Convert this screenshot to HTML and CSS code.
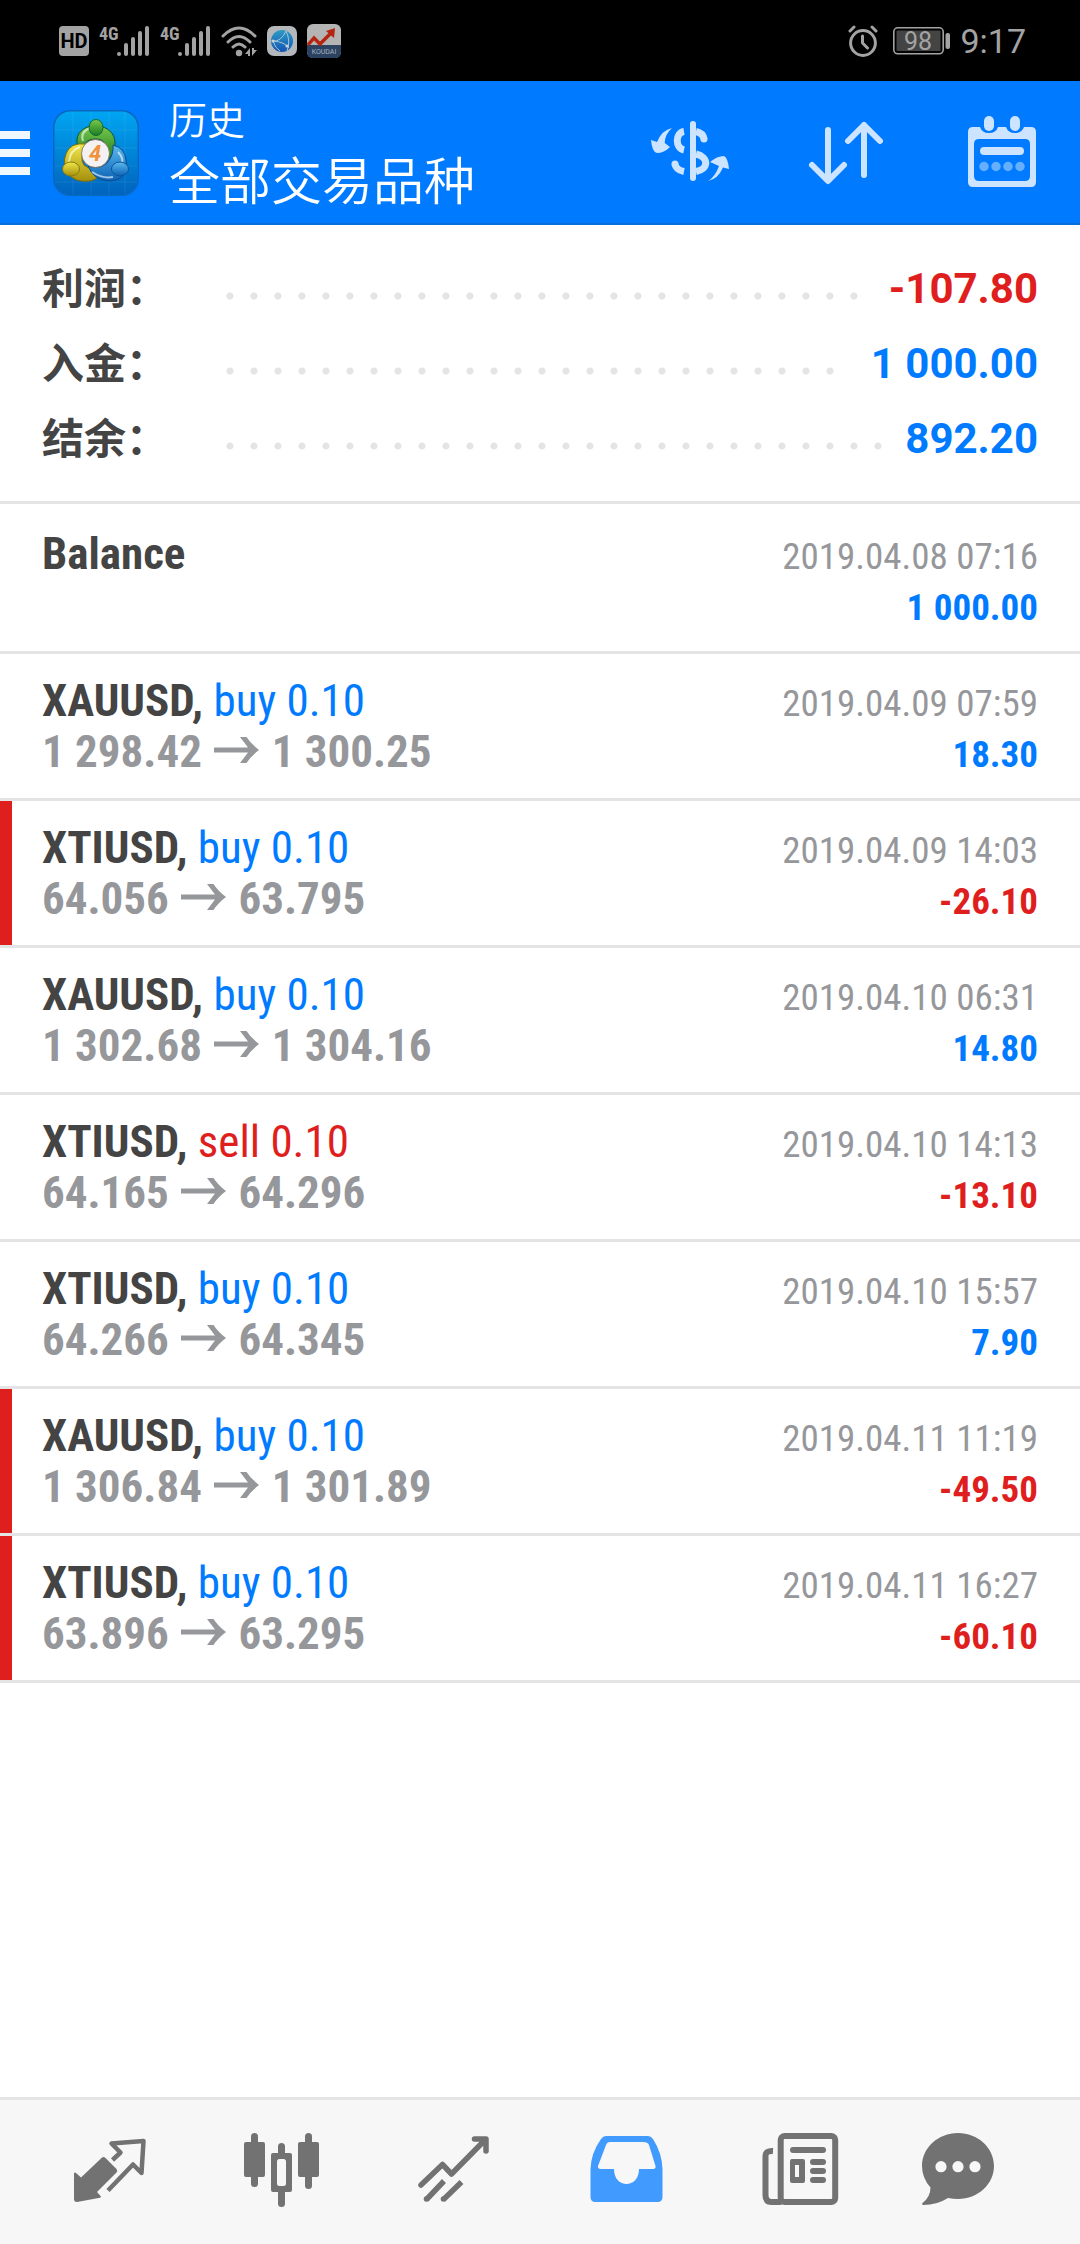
FILE: index.html
```html
<!DOCTYPE html>
<html lang="zh-CN">
<head>
<meta charset="utf-8">
<meta name="viewport" content="width=device-width, initial-scale=1">
<title>历史</title>
<link rel="stylesheet" href="styles.css">
</head>
<body>
<svg class="defs" width="0" height="0" aria-hidden="true"><symbol id="to" viewBox="0 0 45 26"><path d="M0 10.500h34L26 0h6.500Q37 7 45 13Q37 19 32.500 26H26l8-10.500H0z"/></symbol></svg>
<div class="status">
  <div class="status-group">
    <svg class="ic" width="30" height="30" viewBox="0 0 30 30"><rect width="30" height="30" rx="4" fill="#a3a3a3"/><text x="15" y="22" text-anchor="middle" class="hd">HD</text></svg>
    <svg class="ic" width="51" height="34" viewBox="0 0 51 34"><text x="0" y="16" class="net">4G</text><g stroke="#a3a3a3" stroke-width="4" stroke-linecap="round"><path d="M20 30v.1M27 21v9M34 15v15M41 9v21M48 4v26"/></g></svg>
    <svg class="ic" width="51" height="34" viewBox="0 0 51 34"><text x="0" y="16" class="net">4G</text><g stroke="#a3a3a3" stroke-width="4" stroke-linecap="round"><path d="M20 30v.1M27 21v9M34 15v15M41 9v21M48 4v26"/></g></svg>
    <svg class="ic" width="36" height="34" viewBox="0 0 36 34"><g fill="none" stroke="#a3a3a3" stroke-width="3" stroke-linecap="round"><path d="M2 12Q18-4 34 12M7 18Q18 7 29 18M12 23Q18 17 24 23"/></g><circle cx="18" cy="29" r="3.2" fill="#a3a3a3"/><path d="M24 30l5-6v8h-2v-2zM31 24v8l5-6h-3v-2z" fill="#a3a3a3"/></svg>
    <svg class="ic" width="30" height="30" viewBox="0 0 30 30"><defs><linearGradient id="gl" x1="0" y1="0" x2="0" y2="1"><stop offset="0" stop-color="#2b9cc4"/><stop offset="1" stop-color="#1653b4"/></linearGradient></defs><rect width="30" height="30" rx="7" fill="#b4b8ba"/><circle cx="15" cy="15" r="11" fill="url(#gl)"/><path d="M6 15Q14 16 19 5M6 15Q18 16 22 22M19 5Q24 15 20 25M6 15Q8 22 13 25" fill="none" stroke="#a8c4d4"/><circle cx="6" cy="15" r="1.6" fill="#c4d4dc"/><circle cx="20" cy="20" r="1.6" fill="#c4d4dc"/></svg>
    <svg class="ic" width="34" height="34" viewBox="0 0 34 34"><rect width="34" height="34" rx="6" fill="#b4b4b4"/><path d="M0 21h34v7q0 6-6 6H6q-6 0-6-6z" fill="#2b4260"/><path d="M1 21l6-7 6 6L24 9" fill="none" stroke="#b5240e" stroke-width="3.4"/><path d="M28 4l-1 10-8-7z" fill="#b5240e"/><text x="17" y="30" text-anchor="middle" class="koudai">KOUDAI</text></svg>
  </div>
  <div class="status-group">
    <svg class="ic" width="30" height="32" viewBox="0 0 30 32"><g fill="none" stroke="#a3a3a3" stroke-linecap="round" stroke-linejoin="round" stroke-width="3"><circle cx="15" cy="18" r="12.4"/><path d="M14.500 11v7l5 5M2 6l4-4M24 2l4 4"/></g></svg>
    <svg class="ic battery" width="57" height="28" viewBox="0 0 57 28"><rect x=".8" y=".8" width="49.400" height="26" rx="4" fill="#000" stroke="#a3a3a3" stroke-width="1.600"/><rect x="3.500" y="3.500" width="44" height="20.600" rx="1" fill="#444"/><rect x="52.500" y="6" width="4.500" height="16" rx="2" fill="#a3a3a3"/><text x="25" y="23" text-anchor="middle" class="level">98</text></svg>
    <span class="clock">9:17</span>
  </div>
</div>

<header class="bar">
  <button class="menu" aria-label="菜单"><span></span><span></span><span></span></button>
  <svg class="logo" width="86" height="86" viewBox="0 0 86 86">
    <defs>
      <linearGradient id="lb" x1="0" y1="0" x2="0" y2="1"><stop offset="0" stop-color="#00a5f2"/><stop offset="1" stop-color="#0064bd"/></linearGradient>
      <linearGradient id="lg" x1="0" y1="0" x2="0" y2="1"><stop offset="0" stop-color="#7ac94c"/><stop offset="1" stop-color="#1c7d22"/></linearGradient>
      <linearGradient id="ly" x1="0" y1="0" x2="0" y2="1"><stop offset="0" stop-color="#f0e84a"/><stop offset="1" stop-color="#a58f0c"/></linearGradient>
      <linearGradient id="lu" x1="0" y1="0" x2="0" y2="1"><stop offset="0" stop-color="#5cb9ee"/><stop offset="1" stop-color="#0b62b4"/></linearGradient>
    </defs>
    <rect width="86" height="86" rx="17" fill="#0868be"/><rect x="1.500" y="1.500" width="83" height="83" rx="16" fill="url(#lb)"/>
    <path d="M20 2v82M38 2v82M56 2v82M72 2v82M2 20h82M2 38h82M2 56h82M2 72h82" stroke="#fff" stroke-opacity=".07"/>
    <path d="M24 33C22 10 62 10 62 33C62 42 60 46 55 49C55 36 52 29 43 29C33 29 31 34 30 40Q25 38 24 33z" fill="url(#lg)" stroke="#0d5530"/>
    <path d="M33 34Q17 32 13 44Q9 54 15 63Q21 73 37 71Q46 69 52 60Q38 61 31 55Q26 49 33 34z" fill="url(#ly)" stroke="#786b0b"/>
    <path d="M60 35Q72 38 73 50Q77 69 57 71Q41 71 35 56Q46 60 54 53Q61 45 60 35z" fill="url(#lu)" stroke="#084c90"/>
    <path d="M30 31q-3-9 7-13M16 52q1-12 11-15M68 56q4-7-3-14M39 62q11 7 21 5" fill="none" stroke="#fff" stroke-opacity=".6" stroke-width="2"/>
    <ellipse cx="43" cy="17.500" rx="7" ry="8" fill="url(#lg)" stroke="#0d6a35"/>
    <ellipse cx="18" cy="59" rx="8.500" ry="7" fill="url(#ly)" stroke="#8a7b0e"/>
    <ellipse cx="67" cy="59" rx="8.500" ry="7" fill="url(#lu)" stroke="#0a559b"/>
    <circle cx="42.500" cy="43.500" r="14" fill="#f3f1f1" stroke="#73604a" stroke-width=".8"/>
    <text x="42" y="51" text-anchor="middle" class="four">4</text>
  </svg>
  <div class="titles">
    <h1 class="title">历史</h1>
    <p class="subtitle">全部交易品种</p>
  </div>
  <div class="actions">
    <button class="action" aria-label="货币"><svg width="96" height="96" viewBox="0 0 96 96"><g fill="none" stroke="#cce4ff" stroke-width="7"><path d="M42 26.500C33 28 33 43 42 45M54 26.500Q61 28 62 34M54 49C67 52 67 64 54 66.500M33 59Q34 65 42 66.500"/><path d="M51 19v54" stroke-width="6" stroke-linecap="round"/></g><g fill="#cce4ff"><circle cx="62" cy="34" r="3.500"/><circle cx="33" cy="59" r="3.500"/><path d="M9 35l6 2Q20 25 30 23Q23 29 22.700 38L28 42Q22 48 15 48Q10 47 9 35zM66 76Q73 72 77 61L68 57Q75 51 82 51Q86 53 87 64L81 62.500Q76 74 66 76z"/></g></svg></button>
    <button class="action" aria-label="排序"><svg width="96" height="96" viewBox="0 0 96 96"><path d="M30 25v50M14 60l16 16 16-16M66 70V20M50 36l16-16 16 16" fill="none" stroke="#cce4ff" stroke-width="6" stroke-linecap="round" stroke-linejoin="round"/></svg></button>
    <button class="action" aria-label="日期"><svg width="96" height="96" viewBox="0 0 96 96"><path fill="#cce4ff" fill-rule="evenodd" d="M19 22h7q2 6 9 6t9-6h8q2 6 9 6t9-6h7q5 0 5 5v50q0 5-5 5H19q-5 0-5-5V27q0-5 5-5zM25 34q-5 0-5 5v32q0 5 5 5h46q5 0 5-5V39q0-5-5-5z"/><g fill="#cce4ff"><rect x="30" y="11" width="10" height="15" rx="5"/><rect x="56" y="11" width="10" height="15" rx="5"/><rect x="26" y="42" width="44" height="8" rx="4"/><g opacity=".5"><circle cx="30" cy="61.500" r="4.700"/><circle cx="42" cy="61.500" r="4.700"/><circle cx="54" cy="61.500" r="4.700"/><circle cx="66" cy="61.500" r="4.700"/></g></g></svg></button>
  </div>
</header>

<main class="content">
  <dl class="summary">
    <div class="sum"><dt>利润：</dt><dd><span class="leader"><i class="dots"></i></span><span class="total loss">-107.80</span></dd></div>
    <div class="sum"><dt>入金：</dt><dd><span class="leader"><i class="dots"></i></span><span class="total gain">1 000.00</span></dd></div>
    <div class="sum"><dt>结余：</dt><dd><span class="leader"><i class="dots"></i></span><span class="total gain">892.20</span></dd></div>
  </dl>
  <ul class="deals">
    <li class="deal deal-first"><div class="line"><b class="symbol">Balance</b><time class="date">2019.04.08 07:16</time></div><div class="line"><b class="prices">&nbsp;</b><b class="amount gain">1 000.00</b></div></li>
    <li class="deal"><div class="line"><span><b class="symbol">XAUUSD,</b> <span class="gain">buy 0.10</span></span><time class="date">2019.04.09 07:59</time></div><div class="line"><b class="prices">1 298.42 <svg class="arrow" role="img" aria-label="→"><use href="#to"/></svg> 1 300.25</b><b class="amount gain">18.30</b></div></li>
    <li class="deal stopped"><div class="line"><span><b class="symbol">XTIUSD,</b> <span class="gain">buy 0.10</span></span><time class="date">2019.04.09 14:03</time></div><div class="line"><b class="prices">64.056 <svg class="arrow" role="img" aria-label="→"><use href="#to"/></svg> 63.795</b><b class="amount loss">-26.10</b></div></li>
    <li class="deal"><div class="line"><span><b class="symbol">XAUUSD,</b> <span class="gain">buy 0.10</span></span><time class="date">2019.04.10 06:31</time></div><div class="line"><b class="prices">1 302.68 <svg class="arrow" role="img" aria-label="→"><use href="#to"/></svg> 1 304.16</b><b class="amount gain">14.80</b></div></li>
    <li class="deal"><div class="line"><span><b class="symbol">XTIUSD,</b> <span class="loss">sell 0.10</span></span><time class="date">2019.04.10 14:13</time></div><div class="line"><b class="prices">64.165 <svg class="arrow" role="img" aria-label="→"><use href="#to"/></svg> 64.296</b><b class="amount loss">-13.10</b></div></li>
    <li class="deal"><div class="line"><span><b class="symbol">XTIUSD,</b> <span class="gain">buy 0.10</span></span><time class="date">2019.04.10 15:57</time></div><div class="line"><b class="prices">64.266 <svg class="arrow" role="img" aria-label="→"><use href="#to"/></svg> 64.345</b><b class="amount gain">7.90</b></div></li>
    <li class="deal stopped"><div class="line"><span><b class="symbol">XAUUSD,</b> <span class="gain">buy 0.10</span></span><time class="date">2019.04.11 11:19</time></div><div class="line"><b class="prices">1 306.84 <svg class="arrow" role="img" aria-label="→"><use href="#to"/></svg> 1 301.89</b><b class="amount loss">-49.50</b></div></li>
    <li class="deal stopped"><div class="line"><span><b class="symbol">XTIUSD,</b> <span class="gain">buy 0.10</span></span><time class="date">2019.04.11 16:27</time></div><div class="line"><b class="prices">63.896 <svg class="arrow" role="img" aria-label="→"><use href="#to"/></svg> 63.295</b><b class="amount loss">-60.10</b></div></li>
  </ul>
</main>

<nav class="tabs">
  <button class="tab" aria-label="行情"><svg width="96" height="96" viewBox="0 0 96 96"><path fill="#727272" d="M12 49q1-1 2 0l5 4.500 20.500-19.500q2-2 4 0L54.500 45q1.500 2 0 3.500L35 68l4 4.500q0 1-1 1.200L15 78q-3 0-3-3z"/><path fill="none" stroke="#727272" stroke-width="4.500" stroke-linejoin="round" d="M50.500 36l8-7.500-9-9 32-2.500-2 32-8.500-8.500L46 66.500"/></svg></button>
  <button class="tab" aria-label="图表"><svg width="96" height="96" viewBox="0 0 96 96"><g fill="#727272"><rect x="10" y="18" width="21" height="35" rx="2"/><rect x="17" y="9" width="7" height="54" rx="3.500"/><rect x="64" y="18" width="21" height="35" rx="2"/><rect x="71" y="9" width="7" height="56" rx="3.500"/><rect x="44" y="19" width="7" height="64" rx="3.500"/><rect x="37" y="29" width="21" height="39" rx="2"/></g><rect x="43" y="35" width="9" height="27" rx="2.500" fill="#f7f7f7"/></svg></button>
  <button class="tab" aria-label="交易"><svg width="96" height="96" viewBox="0 0 96 96"><g fill="none" stroke="#727272" stroke-width="5.500"><path stroke-linecap="round" stroke-linejoin="round" d="M15 61l21.500-20.500 9 9.500L79 16M68.500 15H80v12"/><path d="M20.500 75.500L38 57M37.500 75.500L55.500 58"/></g><circle cx="20.500" cy="75" r="2.800" fill="#727272"/><circle cx="37.500" cy="75" r="2.800" fill="#727272"/></svg></button>
  <button class="tab" aria-label="历史" aria-current="page"><svg width="96" height="96" viewBox="0 0 96 96"><path fill="#419bff" fill-rule="evenodd" d="M28 12h42q3 0 5 3Q84 29 84.500 45v28q0 5-5 5h-62q-5 0-5-5V45Q13 29 23 15q2-3 5-3zM32 18q-3 0-4 3l-8 21q-.5 3 3 3h13c0 20 25 20 25 0h14q3 0 2.500-3L71 21q-1-3-6-3z"/></svg></button>
  <button class="tab" aria-label="新闻"><svg width="96" height="96" viewBox="0 0 96 96"><g fill="none" stroke="#727272" stroke-width="6"><rect x="30.700" y="12" width="54.500" height="66" rx="4"/><path d="M23 27q-7.500-.5-7.500 5v39q0 7 6 7h10"/></g><g fill="#727272"><rect x="40" y="23" width="36" height="6" rx="3"/><path fill-rule="evenodd" d="M42 35h11q2 0 2 2v20q0 2-2 2H42q-2 0-2-2V37q0-2 2-2zM45 41v12h4V41z"/><rect x="60" y="35" width="16" height="6" rx="3"/><rect x="60" y="44" width="16" height="6" rx="3"/><rect x="60" y="53" width="16" height="6" rx="3"/></g></svg></button>
  <button class="tab" aria-label="聊天"><svg width="96" height="96" viewBox="0 0 96 96"><path fill="#727272" d="M36 9c20 0 36 15 36 33S56 75 36 75q-5 0-10-1Q15 81 1.500 81q-2-.5-1-2Q8.500 73 8.500 63.500Q0 54 0 42C0 24 16 9 36 9z"/><g fill="#f7f7f7"><circle cx="19" cy="42.700" r="5.600"/><circle cx="36" cy="42.700" r="5.600"/><circle cx="53" cy="42.700" r="5.600"/></g></svg></button>
</nav>
</body>
</html>
```
FILE: styles.css
```css
* {
  box-sizing: border-box;
}

body {
  margin: 0;
  min-height: 100vh;
  display: flex;
  flex-direction: column;
  background: #fff;
  color: #444;
  font-family: Roboto, "Noto Sans CJK SC", sans-serif;
}

button {
  padding: 0;
  border: 0;
  background: none;
  cursor: pointer;
}

svg {
  display: block;
}

h1, p, dl, dd, ul {
  margin: 0;
  padding: 0;
}

.gain {
  color: #007bff;
}

.loss {
  color: #df1e1e;
}

/* Status bar */
.status {
  height: 81px;
  padding: 0 54px 0 59px;
  display: flex;
  align-items: center;
  justify-content: space-between;
  background: #000;
  color: #a3a3a3;
}

.status-group {
  display: flex;
  align-items: center;
  gap: 10px;
}

.battery {
  margin-left: 5px;
}

.hd {
  font-size: 20px;
  font-weight: 700;
  fill: #000;
}

.net {
  font-family: "Roboto Condensed", "Liberation Sans Narrow", sans-serif;
  font-size: 18px;
  font-weight: 700;
  fill: #a3a3a3;
}

.koudai {
  font-size: 7px;
  fill: #a9b4c2;
}

.level {
  font-size: 25px;
  fill: #a3a3a3;
}

.clock {
  font-size: 34px;
  line-height: 40px;
}

/* Header */
.bar {
  height: 144px;
  display: flex;
  align-items: center;
  background: #007bff;
  box-shadow: inset 0 -2px #0a6ed8;
  color: #fff;
}

.menu {
  width: 30px;
  display: grid;
  gap: 10px;
}

.menu span {
  height: 8px;
  background: #f0f8ff;
}

.logo {
  margin: 0 30px 0 23px;
}

.four {
  font-size: 22px;
  font-weight: 700;
  font-style: italic;
  fill: #f0923c;
}

.titles {
  flex: 1;
  padding-bottom: 6px;
  font-family: "Noto Sans CJK SC", sans-serif;
  font-weight: 350;
}

.title {
  font-size: 38px;
  line-height: 56px;
  font-weight: 350;
}

.subtitle {
  font-size: 51px;
  line-height: 64px;
}

.actions {
  display: flex;
}

.action {
  width: 156px;
  height: 144px;
  display: grid;
  place-items: center;
}

/* Totals */
.content {
  flex: 1;
}

.summary {
  padding: 26px 42px 25px;
  border-bottom: 3px solid #e4e4e4;
  font-size: 42px;
  line-height: 75px;
  font-weight: 700;
}

.sum {
  display: flex;
}

.sum dt {
  width: 176px;
  font-family: "Noto Sans CJK SC", sans-serif;
  line-height: 70px;
}

.sum dd {
  flex: 1;
  display: flex;
  gap: 10px;
}

.leader {
  flex: 1;
}

.dots {
  display: block;
  width: round(down, 100%, 24px);
  height: 90px;
  margin-bottom: -15px;
  background: radial-gradient(circle, #e4e4e4 3px, transparent 4px) 0 0 / 24px 100%;
}

/* Deals */
.deals {
  list-style: none;
  font-family: "Roboto Condensed", "Liberation Sans Narrow", sans-serif;
  font-size: 45px;
  line-height: 51px;
}

.deal {
  padding: 21px 42px;
  border-bottom: 3px solid #e4e4e4;
}

.deal-first {
  padding-top: 24px;
}

.stopped {
  background: linear-gradient(#df1e1e, #df1e1e) 0 0 / 12px 100% no-repeat padding-box;
}

.line {
  height: 51px;
  display: flex;
  align-items: baseline;
  justify-content: space-between;
}

.prices {
  color: #96979b;
}

.arrow {
  display: inline-block;
  width: 45px;
  height: 26px;
  margin: 0 2px;
  vertical-align: 4px;
  fill: currentColor;
}

.date {
  font-size: 37px;
  color: #96979b;
}

.amount {
  font-size: 37px;
}

/* Bottom tabs */
.tabs {
  height: 147px;
  padding: 0 24px;
  display: grid;
  grid-template-columns: repeat(6, 1fr);
  background: #f7f7f7;
  border-top: 3px solid #e4e4e4;
}

.tab {
  display: grid;
  place-items: center;
}

.defs {
  position: absolute;
}
```
